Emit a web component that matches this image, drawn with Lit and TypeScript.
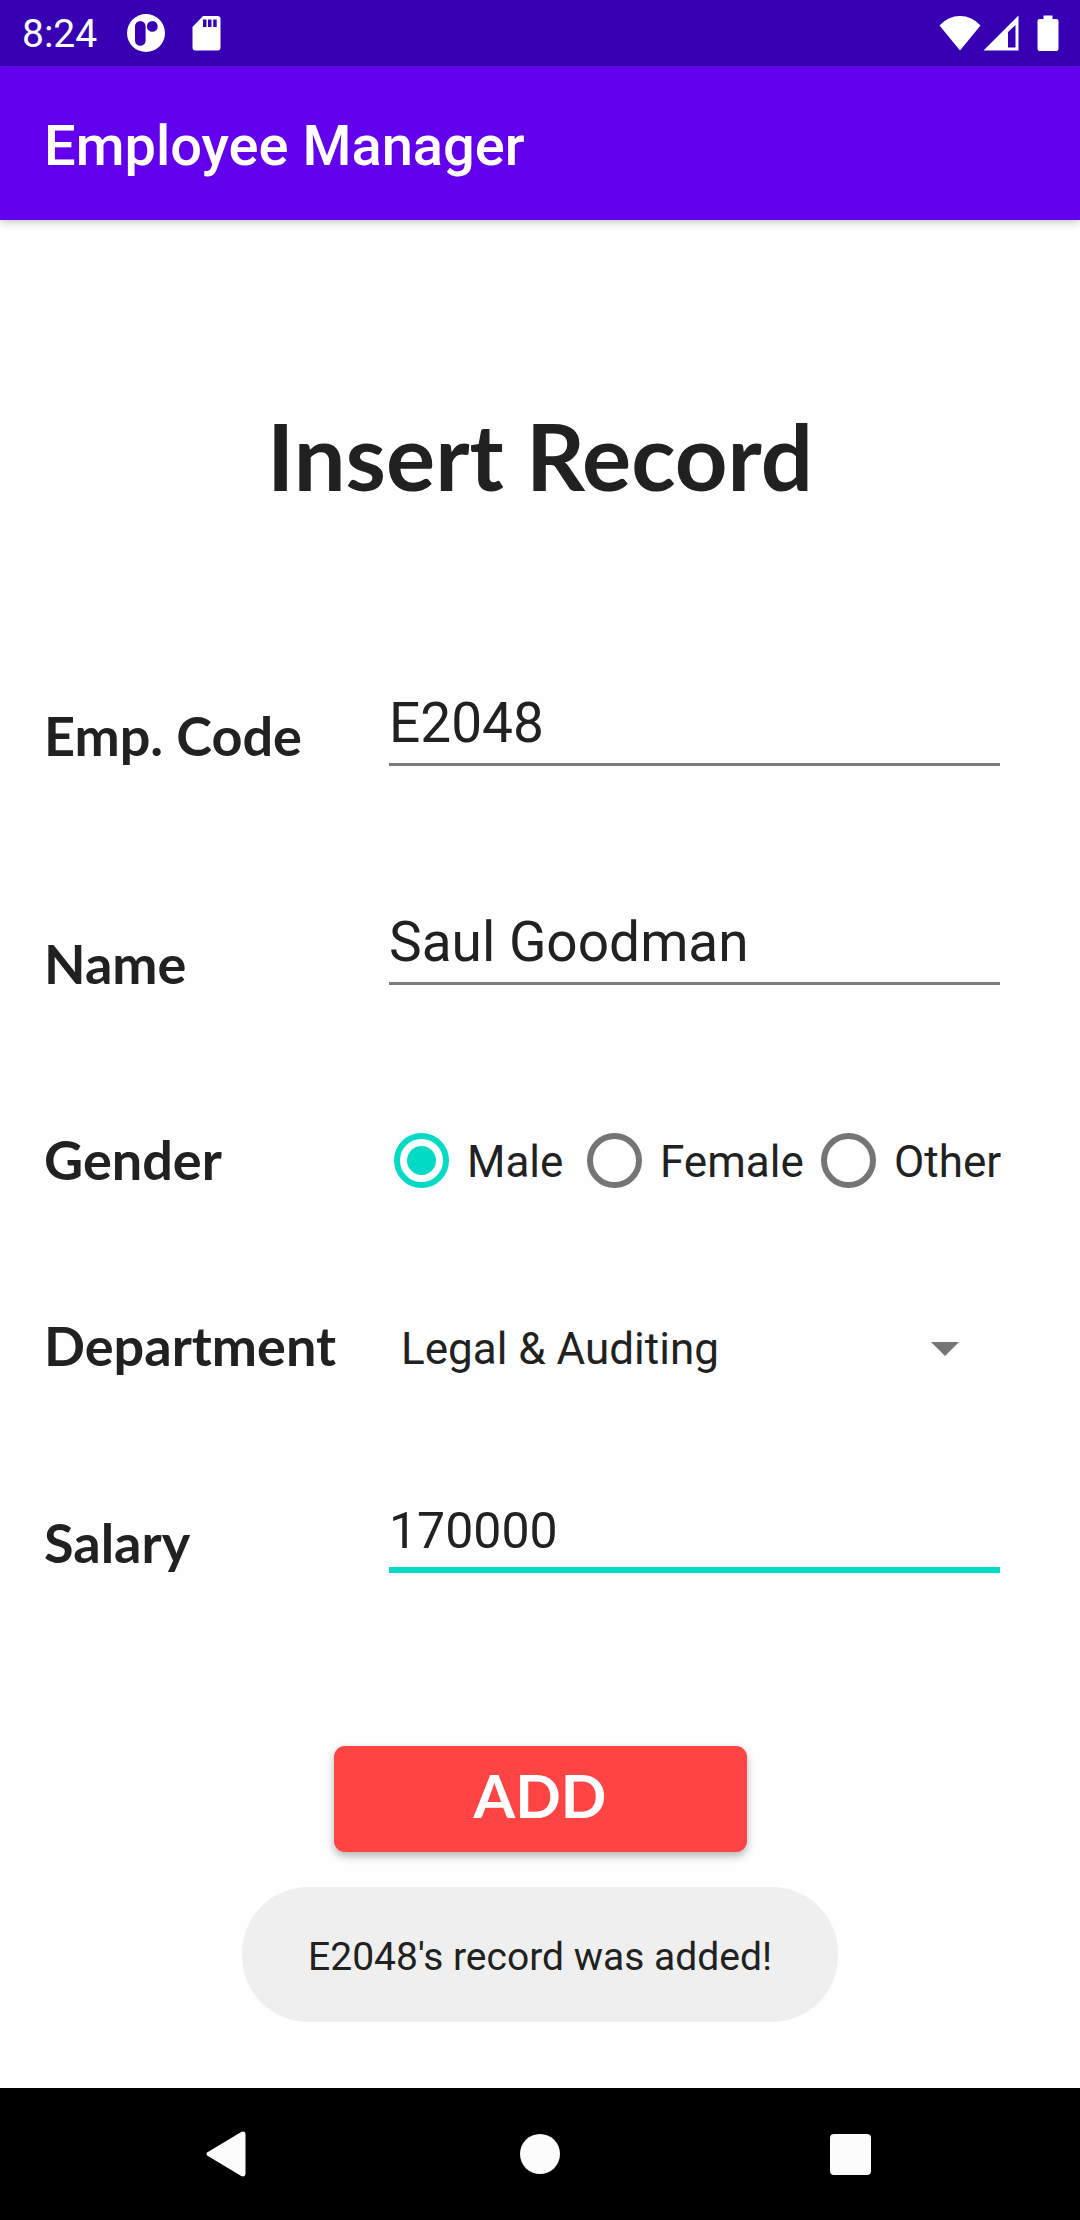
import { LitElement, html, css } from "lit";
import { customElement, state } from "lit/decorators.js";

@customElement("status-bar")
class StatusBar extends LitElement {
  static styles = css`
    :host {
      display: flex;
      align-items: center;
      justify-content: space-between;
      height: 66px;
      padding: 0 21px 0 22px;
      background: #3700b3;
      color: #fff;
      font: 400 39px/66px Roboto, sans-serif;
    }
    .group {
      display: flex;
      align-items: center;
    }
    .clock {
      margin-right: 29px;
      padding-top: 2px;
    }
    svg {
      display: block;
      fill: #fff;
    }
    .card {
      margin-left: 26px;
    }
    .signal {
      margin-left: 2px;
    }
    .battery {
      margin-left: 18px;
    }
  `;

  render() {
    return html`
      <div class="group">
        <span class="clock">8:24</span>
        <svg width="40" height="40" viewBox="0 0 40 40" aria-hidden="true">
          <path
            fill-rule="evenodd"
            d="M20 1a19 19 0 1 1 0 38a19 19 0 1 1 0-38zM14.3 8A5.3 5.3 0 0 0 9 13.3V27.500a5.300 5.300 0 0 0 10.600 0V13.300A5.300 5.300 0 0 0 14.300 8zM26.300 8a5.400 5.400 0 1 0 0 10.800a5.400 5.400 0 1 0 0-10.800z"
          />
        </svg>
        <svg class="card" width="30" height="40" viewBox="0 0 30 40" aria-hidden="true">
          <path
            fill-rule="evenodd"
            d="M11 3H25.500a3 3 0 0 1 3 3V34.500a3 3 0 0 1-3 3H3.500a3 3 0 0 1-3-3V14zM11 6.500V14h3.500V6.500zM16 6.500V14h3.500V6.500zM21.200 6.500V14h3.500V6.500z"
          />
        </svg>
      </div>
      <div class="group">
        <svg width="42" height="36" viewBox="0 0 42 36" aria-hidden="true">
          <path d="M21 35.500L0.500 10.500Q9 1 21 1T41.500 10.500z" />
        </svg>
        <svg class="signal" width="36" height="36" viewBox="0 0 36 36" aria-hidden="true">
          <path fill-rule="evenodd" d="M35.500 0.500V35.500H0.500zM32.500 10L25 17V32.500H32.500z" />
        </svg>
        <svg class="battery" width="22" height="36" viewBox="0 0 22 36" aria-hidden="true">
          <path d="M6.500 0.500H15.500V4H19.500a2 2 0 0 1 2 2V34a2 2 0 0 1-2 2H2.500a2 2 0 0 1-2-2V6a2 2 0 0 1 2-2H6.500z" />
        </svg>
      </div>
    `;
  }
}

@customElement("navigation-bar")
class NavigationBar extends LitElement {
  static styles = css`
    :host {
      display: flex;
      justify-content: center;
      align-items: center;
      gap: 222px;
      height: 132px;
      background: #000;
    }
    button {
      display: grid;
      place-items: center;
      width: 88px;
      height: 88px;
      padding: 0;
      border: 0;
      background: none;
    }
    svg {
      fill: #fcfcfc;
    }
  `;

  render() {
    return html`
      <button aria-label="Back">
        <svg width="48" height="48" viewBox="0 0 48 48">
          <path d="M1.500 22.200L35.200 2Q39.200 0.500 39.500 4V44Q39.200 47.500 35.200 46L1.500 25.800Q-0.500 24 1.500 22.200z" />
        </svg>
      </button>
      <button aria-label="Home">
        <svg width="48" height="48" viewBox="0 0 48 48"><circle cx="24" cy="24" r="20" /></svg>
      </button>
      <button aria-label="Overview">
        <svg width="48" height="48" viewBox="0 0 48 48"><rect x="4" y="4" width="41" height="41" rx="4" /></svg>
      </button>
    `;
  }
}

@customElement("app-root")
class AppRoot extends LitElement {
  @state() private gender = "Male";

  static styles = css`
    :host {
      display: flex;
      flex-direction: column;
      min-height: 100vh;
      background: #fefefe;
      color: #212121;
      font-family: Roboto, sans-serif;
    }
    * {
      box-sizing: border-box;
    }
    .app-bar {
      position: relative;
      display: flex;
      align-items: center;
      height: 154px;
      padding: 6px 44px 0;
      background: #6200ee;
      color: #fff;
      font-size: 56px;
      font-weight: 500;
      line-height: 64px;
      box-shadow: 0 2px 8px rgba(0, 0, 0, 0.24);
    }
    main {
      position: relative;
      flex: 1;
      display: flex;
      flex-direction: column;
    }
    h1 {
      margin: 176px 0 0;
      text-align: center;
      font: 700 92px/120px Lato, sans-serif;
    }
    form {
      display: flex;
      flex-direction: column;
      padding: 175px 80px 0 44px;
    }
    .row {
      display: grid;
      grid-template-columns: 345px 1fr;
      align-items: end;
    }
    .name {
      margin-top: 144px;
      min-height: 84px;
    }
    .name input {
      align-self: start;
    }
    .gender {
      margin-top: 132px;
      align-items: center;
    }
    .department {
      margin-top: 117px;
      min-height: 70px;
    }
    .department .label {
      align-self: center;
    }
    .salary {
      margin-top: 118px;
    }
    .label {
      font: 700 54px/60px Lato, sans-serif;
    }
    .text {
      display: block;
      width: 100%;
      height: 75px;
      margin: 0;
      padding: 0 0 8px;
      border: 0;
      border-bottom: 3px solid #7b7b7b;
      border-radius: 0;
      outline: 0;
      background: none;
      color: inherit;
      font: 400 55px/64px Roboto, sans-serif;
    }
    .text.active {
      height: 74px;
      padding-bottom: 4px;
      border-bottom: 6px solid #03dac5;
      font-size: 50px;
    }
    .choices {
      display: grid;
      grid-template-columns: 193px 234px auto;
      padding-left: 5px;
    }
    .choice {
      display: flex;
      align-items: center;
      gap: 18px;
      font-size: 44px;
      line-height: 64px;
    }
    .choice span {
      padding-top: 4px;
    }
    .choice input {
      appearance: none;
      flex: none;
      width: 55px;
      height: 55px;
      margin: 0;
      border: 6px solid #757575;
      border-radius: 50%;
    }
    .choice input:checked {
      border-color: #03dac5;
      background: radial-gradient(circle, #03dac5 14px, transparent 15px);
    }
    .picker {
      display: grid;
      align-items: center;
    }
    .picker select,
    .picker svg {
      grid-area: 1 / 1;
    }
    .picker select {
      appearance: none;
      width: 100%;
      height: 64px;
      padding: 0 88px 0 12px;
      border: 0;
      outline: 0;
      background: none;
      color: inherit;
      font: 400 44px/64px Roboto, sans-serif;
    }
    .picker svg {
      justify-self: end;
      margin-right: 41px;
      fill: #757575;
      pointer-events: none;
    }
    .add {
      align-self: center;
      width: 413px;
      height: 106px;
      margin: 173px 0 0 36px;
      padding: 0 0 8px;
      border: 0;
      border-radius: 11px;
      background: #ff4444;
      color: #fff;
      font: 700 60px/64px Lato, sans-serif;
      box-shadow: 0 4px 9px rgba(0, 0, 0, 0.3);
    }
    .toast {
      position: absolute;
      left: 50%;
      bottom: 66px;
      transform: translateX(-50%);
      padding: 38px 66px 33px;
      border-radius: 66px;
      background: #efefef;
      font-size: 39px;
      line-height: 64px;
      white-space: nowrap;
    }
  `;

  render() {
    return html`
      <status-bar></status-bar>
      <header class="app-bar">Employee Manager</header>
      <main>
        <h1>Insert Record</h1>
        <form @submit=${(e: Event) => e.preventDefault()}>
          <div class="row">
            <label class="label" for="code">Emp. Code</label>
            <input class="text" id="code" type="text" value="E2048" />
          </div>
          <div class="row name">
            <label class="label" for="name">Name</label>
            <input class="text" id="name" type="text" value="Saul Goodman" />
          </div>
          <div class="row gender">
            <span class="label" id="gender">Gender</span>
            <div class="choices" role="radiogroup" aria-labelledby="gender">
              ${["Male", "Female", "Other"].map(
                (g) => html`<label class="choice">
                  <input
                    type="radio"
                    name="gender"
                    value=${g}
                    .checked=${this.gender === g}
                    @change=${() => (this.gender = g)}
                  /><span>${g}</span></label
                >`
              )}
            </div>
          </div>
          <div class="row department">
            <label class="label" for="department">Department</label>
            <div class="picker">
              <select id="department">
                <option>Legal &amp; Auditing</option>
              </select>
              <svg width="28" height="14" viewBox="0 0 28 14" aria-hidden="true"><path d="M0 0H28L14 14z" /></svg>
            </div>
          </div>
          <div class="row salary">
            <label class="label" for="salary">Salary</label>
            <input class="text active" id="salary" type="text" inputmode="numeric" value="170000" />
          </div>
          <button class="add" type="submit">ADD</button>
        </form>
        <div class="toast" role="status">E2048's record was added!</div>
      </main>
      <navigation-bar></navigation-bar>
    `;
  }
}
